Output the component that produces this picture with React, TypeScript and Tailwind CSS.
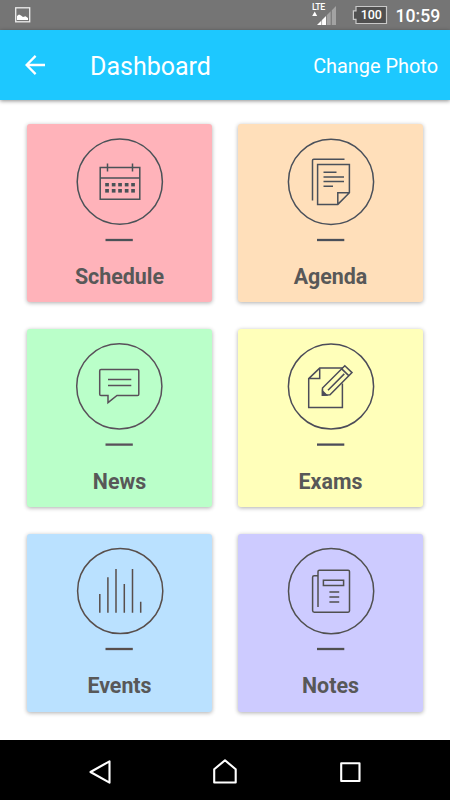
import React from "react";

type Tile = {
  label: string;
  bg: string;
  ink: string;
  viewBox: string;
  cx: number;
  cy: number;
  dash: [number, number];
  labelGap: string;
  art: React.ReactNode;
};

const calendarColumns = [45.2, 51.8, 58.2, 64.8, 71.2];

const tiles: Tile[] = [
  {
    label: "Schedule",
    bg: "bg-[#ffb3ba]",
    ink: "text-[#4a5257]",
    viewBox: "0 0 120 120",
    cx: 59.8,
    cy: 51.7,
    dash: [45.5, 110],
    labelGap: "mt-[13px]",
    art: (
      <>
        <path d="M40.2 37.6H79.8V69.2H40.2ZM40.2 48H79.8M47.5 33.5V41.5M72.5 33.5V41.5" />
        <g fill="currentColor" stroke="none">
          {calendarColumns.map((x) => (
            <React.Fragment key={x}>
              <rect x={x} y="53" width="3.7" height="3.4" />
              <rect x={x} y="59" width="3.7" height="3.6" />
            </React.Fragment>
          ))}
        </g>
      </>
    ),
  },
  {
    label: "Agenda",
    bg: "bg-[#ffdfba]",
    ink: "text-[#4a505a]",
    viewBox: "1 0 120 120",
    cx: 61,
    cy: 51.8,
    dash: [47, 110],
    labelGap: "mt-[13px]",
    art: (
      <>
        <path d="M42.5 70.5V30.5Q42.5 29.2 43.8 29.2H74.5" />
        <path d="M47.6 34.5H79.4V62.8L67.8 74.4H47.6ZM67.8 74.4V62.8H79.4" />
        <path d="M53.5 42.3H66.5M53.5 47H74M53.5 51.5H74M53.5 56.2H63" />
      </>
    ),
  },
  {
    label: "News",
    bg: "bg-[#baffc9]",
    ink: "text-[#59505a]",
    viewBox: "0 0 120 120",
    cx: 59.3,
    cy: 51.3,
    dash: [45.5, 109.6],
    labelGap: "mt-[13px]",
    art: (
      <>
        <path d="M41 34.5H77.5Q78.8 34.5 78.8 35.8V59.2Q78.8 60.5 77.5 60.5H57L48 67.6V60.5H41Q39.7 60.5 39.7 59.2V35.8Q39.7 34.5 41 34.5Z" />
        <path d="M48 44.4H71.3M48 50.5H71.3" />
      </>
    ),
  },
  {
    label: "Exams",
    bg: "bg-[#ffffba]",
    ink: "text-[#4c4c59]",
    viewBox: "1 0 120 120",
    cx: 61,
    cy: 51.5,
    dash: [47, 109.6],
    labelGap: "mt-[13px]",
    art: (
      <>
        <path d="M73 33.1H49.7L38.7 43.6V72.5H72.4V48.5M49.7 33.1V43.6H38.7" />
        <path d="M52.5 60.2V53L74.8 30.7L82 37.6L60 59.7ZM71.7 33.9L79 40.9M58 55.2L74.3 38.9" />
        <path d="M52.5 60.2V56L56.5 60Z" fill="currentColor" />
      </>
    ),
  },
  {
    label: "Events",
    bg: "bg-[#bae1ff]",
    ink: "text-[#584e4b]",
    viewBox: "0 0 120 120",
    cx: 60.2,
    cy: 51,
    dash: [45.5, 109],
    labelGap: "mt-[12px]",
    art: (
      <path d="M39.8 54V72.7M47.9 37.2V72.7M56 29V72.7M64.3 44V72.7M72.5 29V72.7M80.7 61.7V72.7" />
    ),
  },
  {
    label: "Notes",
    bg: "bg-[#cdcbff]",
    ink: "text-[#50504f]",
    viewBox: "1 0 120 120",
    cx: 61.1,
    cy: 51.2,
    dash: [47, 109],
    labelGap: "mt-[12px]",
    art: (
      <>
        <path d="M48 67V31.6Q48 30.2 49.4 30.2H78.1Q79.5 30.2 79.5 31.6V70.8Q79.5 72.2 78.1 72.2H44.3Q42.6 72.2 42.6 70.5V37.2Q42.6 35.7 44.1 35.7H48" />
        <path d="M53.4 40.3H73.6V45.6H53.4ZM59.4 51.9H69.2M59.4 57H69.2M59.4 62.1H69.2" />
      </>
    ),
  },
];

function Card({ tile }: { tile: Tile }) {
  return (
    <button
      className={`flex h-[178px] w-[185px] flex-col items-center rounded-[3px] pt-[6px] shadow-[0_1px_4px_rgba(0,0,0,0.32)] ${tile.bg}`}
    >
      <svg
        viewBox={tile.viewBox}
        className={`block h-[120px] w-[120px] shrink-0 ${tile.ink}`}
        fill="none"
        stroke="currentColor"
        strokeWidth="1.5"
      >
        <circle cx={tile.cx} cy={tile.cy} r="42.6" />
        {tile.art}
        <path
          d={`M${tile.dash[0]} ${tile.dash[1]}h27.3`}
          strokeWidth="2.3"
        />
      </svg>
      <span className={`text-[21.4px] leading-7 font-bold text-[#585858] ${tile.labelGap}`}>
        {tile.label}
      </span>
    </button>
  );
}

function StatusBar() {
  return (
    <div className="flex h-[30px] items-center bg-[#757575] text-white">
      <svg viewBox="0 0 16 16" className="ml-[15px] h-4 w-4" fill="none">
        <rect x="0.7" y="0.8" width="14" height="14" stroke="#eee" strokeWidth="1.3" />
        <path d="M2 13V9L4 7.6L6 8.4L8 10L10.5 9.2L13 11V13Z" fill="#fff" />
      </svg>
      <svg viewBox="0 0 26 30" className="ml-auto h-[30px] w-[26px]">
        <text x="0" y="10.2" fill="#fff" fontFamily="Roboto, sans-serif" fontSize="8.8" fontWeight="500" textLength="13.3">
          LTE
        </text>
        <path d="M0.2 16L2.7 11.6L5.2 16Z" fill="#fff" />
        <path d="M5 25L14 16V25Z" fill="#fff" />
        <path d="M14.7 25V15.2L18.7 11.2V25ZM19.8 25V10.3L24 6V25Z" fill="#a3a3a3" />
        <path d="M9.6 20V25" stroke="#757575" strokeWidth="0.6" />
      </svg>
      <svg viewBox="0 0 36 20" className="ml-[14px] h-5 w-9">
        <path d="M4 1.5H34.5V18.5H4V14.3H1.4V5.8H4Z" fill="#505050" stroke="#c9c9c9" strokeWidth="1.2" />
        <text x="8.8" y="14.3" fill="#fff" fontFamily="Roboto, sans-serif" fontSize="12.5" fontWeight="500" textLength="21">
          100
        </text>
      </svg>
      <span className="mr-[10.5px] ml-[7.5px] w-[44px] pt-[2px] text-[17.6px] leading-[30px] font-medium whitespace-nowrap">
        10:59
      </span>
    </div>
  );
}

export default function App() {
  return (
    <div className="flex h-[800px] w-[450px] flex-col overflow-hidden bg-white font-['Roboto','Liberation_Sans',sans-serif]">
      <StatusBar />
      <header className="flex h-[70px] shrink-0 items-center bg-[#1dc8ff] text-white shadow-[0_1px_4px_rgba(0,0,0,0.45)]">
        <svg viewBox="0 0 20 20" className="ml-[25px] h-5 w-5" fill="none" stroke="currentColor" strokeWidth="2.3">
          <path d="M20 10H2M10.6 0.9L1.6 10L10.6 19.1" />
        </svg>
        <h1 className="ml-[45px] pt-[3px] text-[25px] leading-8">Dashboard</h1>
        <span className="mr-3 ml-auto pt-[4px] text-[19.9px] leading-8">Change Photo</span>
      </header>
      <main className="grid grow grid-cols-[185px_185px] content-start gap-x-[26px] gap-y-[27px] pt-[24px] pl-[27px]">
        {tiles.map((tile) => (
          <Card key={tile.label} tile={tile} />
        ))}
      </main>
      <nav className="flex h-[60px] shrink-0 items-center justify-center bg-black">
        <svg viewBox="70 740 310 60" className="h-[60px] w-[310px]" fill="none" stroke="#fff" strokeWidth="2.1" strokeLinejoin="round">
          <path d="M109.5 761.3V782.7L90.5 772Z" />
          <path d="M214.2 782.5V769.3L225 760.3L235.7 769.3V782.5Z" />
          <rect x="341.2" y="763.2" width="18.3" height="17.8" />
        </svg>
      </nav>
    </div>
  );
}
